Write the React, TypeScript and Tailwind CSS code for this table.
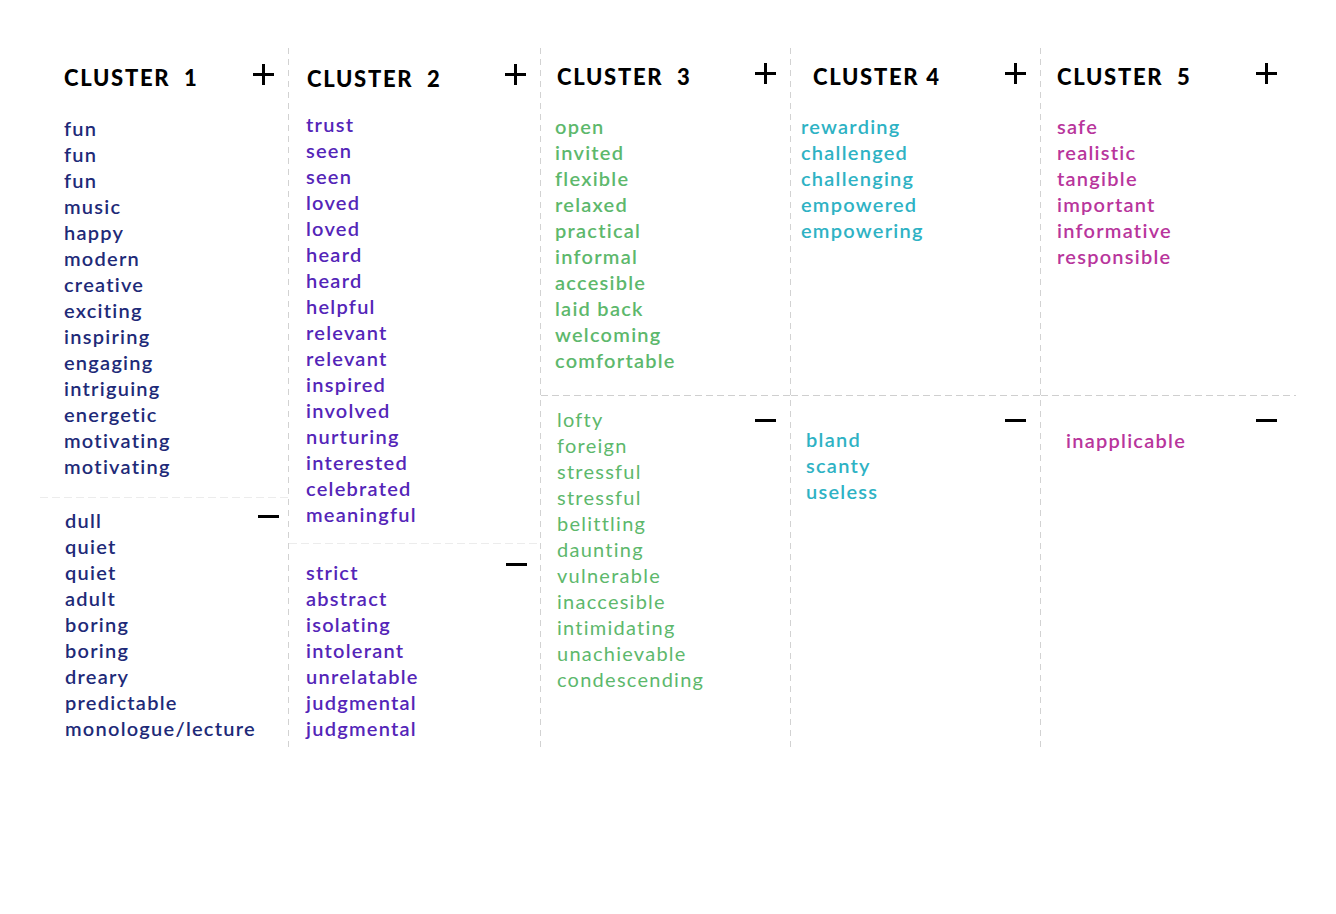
import React from "react";

const FONT = { fontFamily: "Lato, 'Noto Sans', sans-serif" };

function Plus() {
  return (
    <div className="relative w-[21px] h-[21px] shrink-0">
      <div className="absolute left-0 top-[9px] w-[21px] h-[3px] bg-black" />
      <div className="absolute top-0 left-[9px] w-[3px] h-[21px] bg-black" />
    </div>
  );
}

function Minus() {
  return <div className="w-[21px] h-[3px] bg-black shrink-0" />;
}

function VSep() {
  return (
    <div className="w-px h-[704px] shrink-0 bg-[repeating-linear-gradient(to_bottom,#d2d2d2_0px,#d2d2d2_6px,transparent_6px,transparent_11px)]" />
  );
}

function HSep({ light }: { light?: boolean }) {
  return light ? (
    <div className="h-px w-full shrink-0 bg-[repeating-linear-gradient(to_right,#ececec_0px,#ececec_8px,transparent_8px,transparent_12px)]" />
  ) : (
    <div className="h-px w-full shrink-0 bg-[repeating-linear-gradient(to_right,#cfcfcf_0px,#cfcfcf_7px,transparent_7px,transparent_11px)]" />
  );
}

function Words({ words, className }: { words: string[]; className: string }) {
  return (
    <div className={"flex flex-col text-[20px] leading-[26px] tracking-[1.25px] " + className}>
      {words.map((w, i) => (
        <div key={i} className="whitespace-nowrap">
          {w}
        </div>
      ))}
    </div>
  );
}

function Header({ title }: { title: string }) {
  return (
    <div className="text-[22px] leading-[28px] font-black text-black tracking-[1.7px] whitespace-pre">
      {title}
    </div>
  );
}

export default function App() {
  const c1 = "text-[#1e2a78] font-semibold";
  const c2 = "text-[#5425b8] font-semibold";
  const c3 = "text-[#5db86c] font-semibold";
  const c3b = "text-[#5db86c] font-normal";
  const c4 = "text-[#2eb2c4] font-semibold";
  const c5 = "text-[#b8359c] font-semibold";

  return (
    <div className="w-[1336px] h-[914px] bg-white" style={FONT}>
      <div className="flex pt-[48px] pl-[40px]">
        {/* Column 1 */}
        <div className="w-[248px] h-[704px] flex flex-col shrink-0">
          <div className="h-[449px] flex flex-col">
            <div className="flex items-start justify-between pl-[24px] pr-[14px] pt-[16px]">
              <Header title="CLUSTER  1" />
              <div className="mt-[0px]">
                <Plus />
              </div>
            </div>
            <Words
              className={c1 + " pl-[24px] mt-[23px]"}
              words={[
                "fun",
                "fun",
                "fun",
                "music",
                "happy",
                "modern",
                "creative",
                "exciting",
                "inspiring",
                "engaging",
                "intriguing",
                "energetic",
                "motivating",
                "motivating",
              ]}
            />
          </div>
          <HSep light />
          <div className="flex items-start justify-between pl-[25px] pr-[9px]">
            <Words
              className={c1 + " mt-[9px]"}
              words={[
                "dull",
                "quiet",
                "quiet",
                "adult",
                "boring",
                "boring",
                "dreary",
                "predictable",
                "monologue/lecture",
              ]}
            />
            <div className="mt-[17px]">
              <Minus />
            </div>
          </div>
        </div>
        <VSep />
        {/* Column 2 */}
        <div className="w-[251px] h-[704px] flex flex-col shrink-0">
          <div className="h-[495px] flex flex-col">
            <div className="flex items-start justify-between pl-[18px] pr-[14px] pt-[17px]">
              <Header title="CLUSTER  2" />
              <div className="mt-[-1px]">
                <Plus />
              </div>
            </div>
            <Words
              className={c2 + " pl-[17px] mt-[18px]"}
              words={[
                "trust",
                "seen",
                "seen",
                "loved",
                "loved",
                "heard",
                "heard",
                "helpful",
                "relevant",
                "relevant",
                "inspired",
                "involved",
                "nurturing",
                "interested",
                "celebrated",
                "meaningful",
              ]}
            />
          </div>
          <HSep light />
          <div className="flex items-start justify-between pl-[17px] pr-[13px]">
            <Words
              className={c2 + " mt-[15px]"}
              words={[
                "strict",
                "abstract",
                "isolating",
                "intolerant",
                "unrelatable",
                "judgmental",
                "judgmental",
              ]}
            />
            <div className="mt-[19px]">
              <Minus />
            </div>
          </div>
        </div>
        <VSep />
        {/* Column 3 */}
        <div className="w-[249px] h-[704px] flex flex-col shrink-0">
          <div className="h-[347px] flex flex-col">
            <div className="flex items-start justify-between pl-[16px] pr-[14px] pt-[15px]">
              <Header title="CLUSTER  3" />
              <div className="mt-[0px]">
                <Plus />
              </div>
            </div>
            <Words
              className={c3 + " pl-[14px] mt-[22px]"}
              words={[
                "open",
                "invited",
                "flexible",
                "relaxed",
                "practical",
                "informal",
                "accesible",
                "laid back",
                "welcoming",
                "comfortable",
              ]}
            />
          </div>
          <HSep />
          <div className="flex items-start justify-between pl-[16px] pr-[14px]">
            <Words
              className={c3b + " mt-[10px]"}
              words={[
                "lofty",
                "foreign",
                "stressful",
                "stressful",
                "belittling",
                "daunting",
                "vulnerable",
                "inaccesible",
                "intimidating",
                "unachievable",
                "condescending",
              ]}
            />
            <div className="mt-[23px]">
              <Minus />
            </div>
          </div>
        </div>
        <VSep />
        {/* Column 4 */}
        <div className="w-[249px] h-[704px] flex flex-col shrink-0">
          <div className="h-[347px] flex flex-col">
            <div className="flex items-start justify-between pl-[22px] pr-[14px] pt-[15px]">
              <Header title="CLUSTER 4" />
              <div className="mt-[0px]">
                <Plus />
              </div>
            </div>
            <Words
              className={c4 + " pl-[10px] mt-[22px]"}
              words={["rewarding", "challenged", "challenging", "empowered", "empowering"]}
            />
          </div>
          <HSep />
          <div className="flex items-start justify-between pl-[15px] pr-[14px]">
            <Words className={c4 + " mt-[30px]"} words={["bland", "scanty", "useless"]} />
            <div className="mt-[23px]">
              <Minus />
            </div>
          </div>
        </div>
        <VSep />
        {/* Column 5 */}
        <div className="w-[255px] h-[704px] flex flex-col shrink-0">
          <div className="h-[347px] flex flex-col">
            <div className="flex items-start justify-between pl-[16px] pr-[19px] pt-[15px]">
              <Header title="CLUSTER  5" />
              <div className="mt-[0px]">
                <Plus />
              </div>
            </div>
            <Words
              className={c5 + " pl-[16px] mt-[22px]"}
              words={["safe", "realistic", "tangible", "important", "informative", "responsible"]}
            />
          </div>
          <HSep />
          <div className="flex items-start justify-between pl-[25px] pr-[19px]">
            <Words className={c5 + " mt-[31px]"} words={["inapplicable"]} />
            <div className="mt-[23px]">
              <Minus />
            </div>
          </div>
        </div>
      </div>
    </div>
  );
}
